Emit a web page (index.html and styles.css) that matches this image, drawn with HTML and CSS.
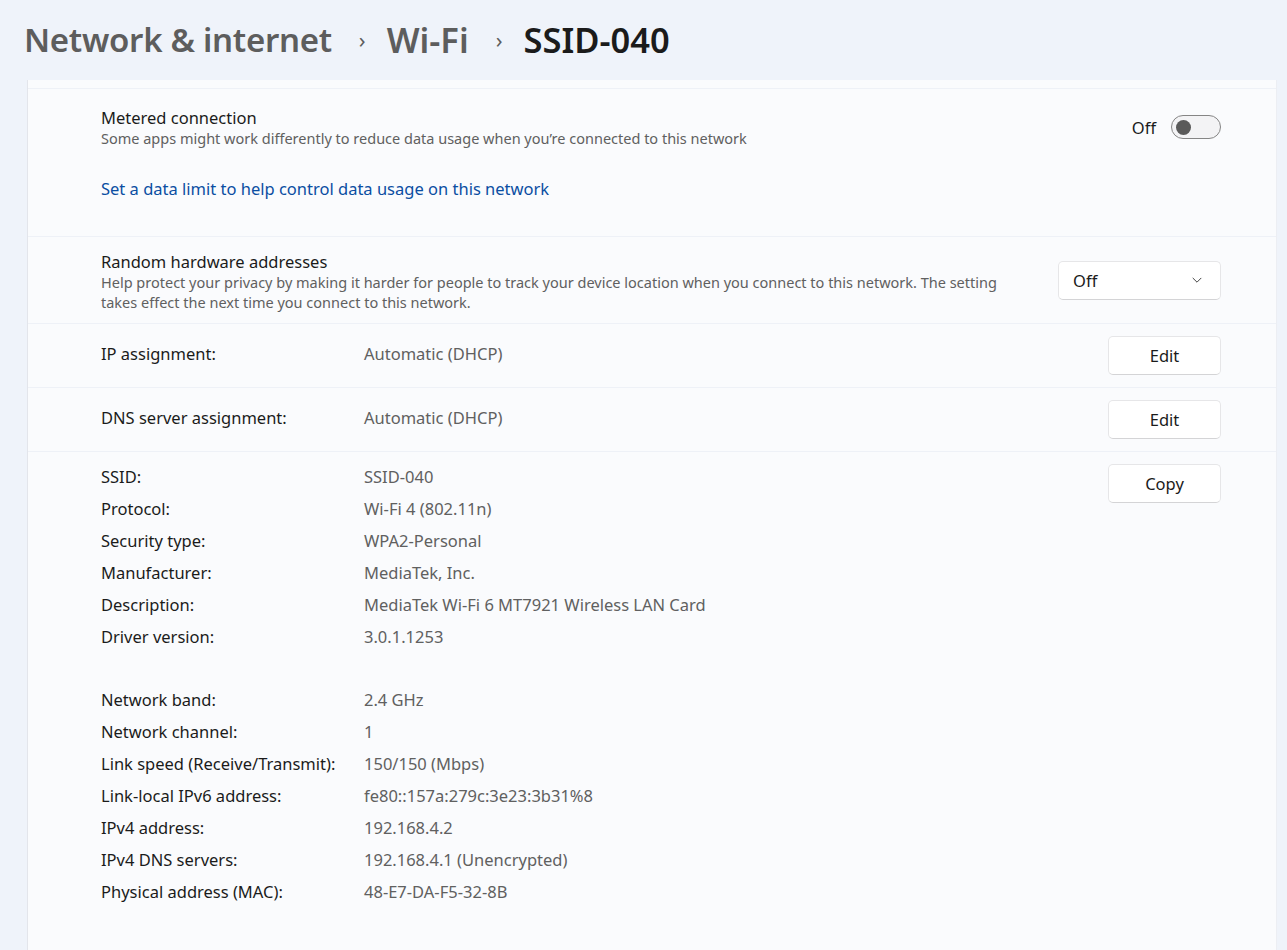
FILE: index.html
```html
<!DOCTYPE html>
<html lang="en">
<head>
<meta charset="utf-8">
<title>SSID-040</title>
<link rel="stylesheet" href="styles.css">
</head>
<body>
<header class="crumbs">
  <span class="crumb first">Network &amp; internet</span>
  <span class="sep">›</span>
  <span class="crumb">Wi-Fi</span>
  <span class="sep">›</span>
  <span class="crumb current">SSID-040</span>
</header>
<main class="card">
  <div class="strip"></div>
  <section class="row metered">
    <div class="main">
      <div class="title">Metered connection</div>
      <div class="desc">Some apps might work differently to reduce data usage when you’re connected to this network</div>
      <a class="link" href="#">Set a data limit to help control data usage on this network</a>
    </div>
    <div class="toggle-wrap">
      <span class="toggle-label">Off</span>
      <span class="toggle"><span class="knob"></span></span>
    </div>
  </section>
  <section class="row random">
    <div class="main">
      <div class="title">Random hardware addresses</div>
      <div class="desc wide">Help protect your privacy by making it harder for people to track your device location when you connect to this network. The setting takes effect the next time you connect to this network.</div>
    </div>
    <div class="select">
      <span>Off</span>
      <svg width="12" height="12" viewBox="0 0 12 12"><path d="M2 4.2 L6 8.2 L10 4.2" fill="none" stroke="#444" stroke-width="1" stroke-linecap="round" stroke-linejoin="round"/></svg>
    </div>
  </section>
  <section class="row kv">
    <span class="k">IP assignment:</span>
    <span class="v">Automatic (DHCP)</span>
    <button class="btn">Edit</button>
  </section>
  <section class="row kv">
    <span class="k">DNS server assignment:</span>
    <span class="v">Automatic (DHCP)</span>
    <button class="btn">Edit</button>
  </section>
  <section class="row props">
    <dl class="grid">
      <dt>SSID:</dt><dd>SSID-040</dd>
      <dt>Protocol:</dt><dd>Wi-Fi 4 (802.11n)</dd>
      <dt>Security type:</dt><dd>WPA2-Personal</dd>
      <dt>Manufacturer:</dt><dd>MediaTek, Inc.</dd>
      <dt>Description:</dt><dd>MediaTek Wi-Fi 6 MT7921 Wireless LAN Card</dd>
      <dt>Driver version:</dt><dd>3.0.1.1253</dd>
      <dt class="gap"></dt><dd class="gap"></dd>
      <dt>Network band:</dt><dd>2.4 GHz</dd>
      <dt>Network channel:</dt><dd>1</dd>
      <dt>Link speed (Receive/Transmit):</dt><dd>150/150 (Mbps)</dd>
      <dt>Link-local IPv6 address:</dt><dd>fe80::157a:279c:3e23:3b31%8</dd>
      <dt>IPv4 address:</dt><dd>192.168.4.2</dd>
      <dt>IPv4 DNS servers:</dt><dd>192.168.4.1 (Unencrypted)</dd>
      <dt>Physical address (MAC):</dt><dd>48-E7-DA-F5-32-8B</dd>
    </dl>
    <button class="btn copy">Copy</button>
  </section>
</main>
</body>
</html>
```

FILE: styles.css
```css
* { box-sizing: border-box; }
html, body { margin: 0; padding: 0; }
body {
  background: #eff3fa;
  font-family: "Noto Sans", "Open Sans", sans-serif;
  color: #1b1b1b;
  height: 950px;
  overflow: hidden;
}
.crumbs {
  height: 80px;
  display: flex;
  align-items: center;
  padding-left: 24px;
  padding-bottom: 2px;
  font-size: 34.5px;
  font-weight: 600;
  color: #5d5d5d;
}
.crumb.first { font-size: 33px; letter-spacing: -0.3px; }
.crumb.current { color: #1b1b1b; }
.sep {
  font-size: 22px;
  font-weight: 400;
  color: #5d5d5d;
  margin: 0 21px 0 27px;
}
.card {
  margin-left: 27px;
  width: 1250px;
  border-left: 1px solid #e3e5eb;
  border-right: 1px solid #eceef3;
  background: #eef1f7;
  display: flex;
  flex-direction: column;
  gap: 1px;
  min-height: 870px;
}
.strip { height: 8px; background: #fafbfd; }
.row {
  background: #fafbfd;
  display: flex;
  padding: 0 55px 0 73px;
}
.title { font-size: 16.5px; line-height: 22px; color: #1b1b1b; }
.desc { font-size: 14.5px; line-height: 19.5px; color: #606060; }
.desc.wide { max-width: 920px; }
.metered { height: 147px; padding-top: 18px; align-items: flex-start; }
.metered .main { flex: 1; display: flex; flex-direction: column; align-items: flex-start; }
.link {
  margin-top: 30px;
  font-size: 16.5px;
  line-height: 20px;
  color: #0b4ea2;
  text-decoration: none;
}
.toggle-wrap {
  display: flex;
  align-items: center;
  margin-top: 8px;
  gap: 15px;
}
.toggle-label { font-size: 16.5px; color: #1b1b1b; }
.toggle {
  width: 50px;
  height: 24px;
  border: 1px solid #858585;
  border-radius: 12px;
  background: #f3f3f5;
  display: flex;
  align-items: center;
  padding-left: 4px;
}
.knob { width: 15px; height: 15px; border-radius: 50%; background: #5a5a5a; }
.random { height: 86px; padding-top: 14px; align-items: flex-start; }
.random .main { flex: 1; }
.select {
  align-self: center;
  margin-top: -14px;
  width: 163px;
  height: 39px;
  background: #ffffff;
  border: 1px solid #e6e6e8;
  border-bottom-color: #d4d4d6;
  border-radius: 5px;
  display: flex;
  align-items: center;
  justify-content: space-between;
  padding: 0 17px 0 14px;
  font-size: 16.5px;
  color: #1b1b1b;
}
.kv { height: 63px; align-items: center; font-size: 16.5px; }
.k { width: 263px; color: #1b1b1b; margin-top: -4px; }
.v { flex: 1; color: #606060; margin-top: -4px; }
.btn {
  width: 113px;
  height: 39px;
  background: #ffffff;
  border: 1px solid #e6e6e8;
  border-bottom-color: #d4d4d6;
  border-radius: 5px;
  font-family: inherit;
  font-size: 16.5px;
  color: #1b1b1b;
  padding: 0;
}
.props { flex: 1; padding-top: 8px; align-items: flex-start; }
.grid {
  flex: 1;
  margin: 0;
  display: grid;
  grid-template-columns: 263px 1fr;
  grid-template-rows: repeat(6, 32px) 31px repeat(7, 32px);
  align-items: center;
  font-size: 16.5px;
}
.grid dt { color: #1b1b1b; }
.grid dd { margin: 0; color: #606060; }
.copy { margin-top: 4px; }
```
